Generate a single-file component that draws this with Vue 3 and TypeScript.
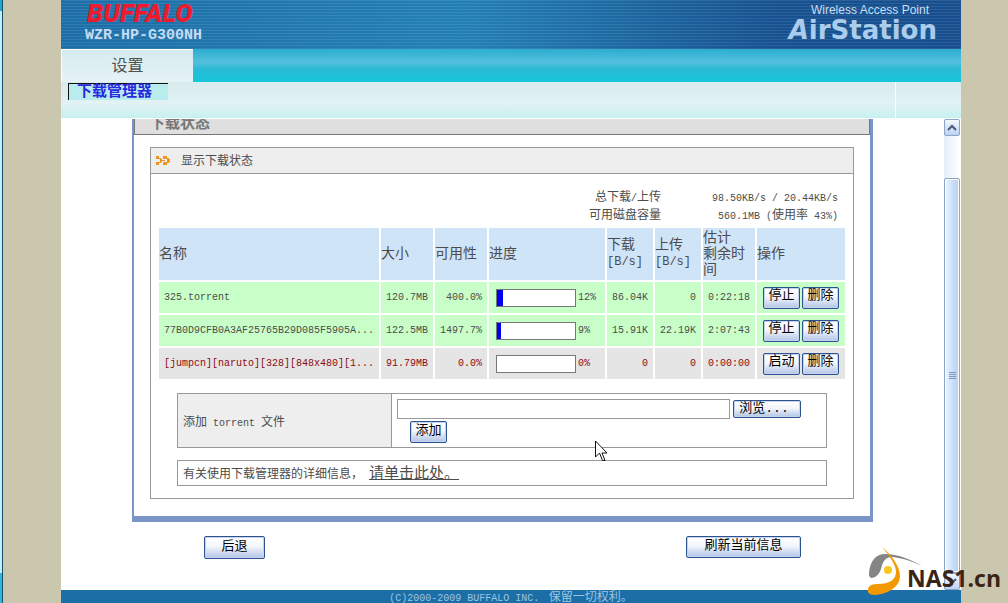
<script setup lang="ts">
import { ref } from 'vue'

interface Torrent {
  name: string
  size: string
  availability: string
  percent: number
  down: string
  up: string
  remaining: string
  running: boolean
}

const torrents = ref<Torrent[]>([
  { name: '325.torrent', size: '120.7MB', availability: '400.0%', percent: 12, down: '86.04K', up: '0', remaining: '0:22:18', running: true },
  { name: '77B0D9CFB0A3AF25765B29D085F5905A...', size: '122.5MB', availability: '1497.7%', percent: 9, down: '15.91K', up: '22.19K', remaining: '2:07:43', running: true },
  { name: '[jumpcn][naruto][328][848x480][1...', size: '91.79MB', availability: '0.0%', percent: 0, down: '0', up: '0', remaining: '0:00:00', running: false },
])

const torrentFile = ref('')
const barWidth = (percent: number) => `${percent === 0 ? 0 : percent - 4}%`
</script>

<template>
  <div class="page">
    <div class="window-edge"></div>
    <div class="site">
      <header class="banner">
        <div class="brand">
          <div class="buffalo">BUFFALO</div>
          <div class="model">WZR-HP-G300NH</div>
        </div>
        <div class="product">
          <div class="tagline">Wireless Access Point</div>
          <div class="airstation"><i>A</i>irStation</div>
        </div>
      </header>

      <nav class="tabs">
        <a href="#settings" class="tab">设置</a>
      </nav>
      <nav class="subnav">
        <a href="#downloads" class="subtab">下载管理器</a>
      </nav>

      <div class="viewport">
        <main class="content">
          <section class="panel">
            <h1 class="panel-title"><span>下载状态</span></h1>
            <div class="box">
              <h2 class="box-title">
                <svg width="14" height="9" viewBox="0 0 14 9" fill="#ee9420" aria-hidden="true">
                  <path d="M0 0h3v2h2v1h1v3H5v1H3v2H0V6h2V3H0z" />
                  <path d="M7 0h4v2h2v1h1v3h-1v1h-2v2H7V6h2V5H6V4h3V3H7z" />
                  <path d="M2 3h2v3H2zM9 3h2v3H9z" fill="#eeeeee" />
                </svg>
                <span>显示下载状态</span>
              </h2>
              <dl class="stats">
                <dt>总下载<span class="latin">/</span>上传</dt>
                <dd><span class="latin">98.50KB/s / 20.44KB/s</span></dd>
                <dt>可用磁盘容量</dt>
                <dd><span class="latin">560.1MB (</span>使用率<span class="latin"> 43%)</span></dd>
              </dl>

              <table class="torrents">
                <colgroup>
                  <col class="c-name" /><col class="c-mid" /><col class="c-mid" /><col class="c-progress" />
                  <col class="c-rate" /><col class="c-rate" /><col class="c-mid" /><col class="c-actions" />
                </colgroup>
                <thead>
                  <tr>
                    <th scope="col">名称</th>
                    <th scope="col">大小</th>
                    <th scope="col">可用性</th>
                    <th scope="col">进度</th>
                    <th scope="col">下载<br /><span class="unit">[B/s]</span></th>
                    <th scope="col">上传<br /><span class="unit">[B/s]</span></th>
                    <th scope="col">估计<br />剩余时间</th>
                    <th scope="col">操作</th>
                  </tr>
                </thead>
                <tbody>
                  <tr v-for="t in torrents" :key="t.name" :class="{ stopped: !t.running }">
                    <td class="name">{{ t.name }}</td>
                    <td>{{ t.size }}</td>
                    <td>{{ t.availability }}</td>
                    <td class="progress">
                      <div class="meter">
                        <div class="bar"><div class="fill" :style="{ width: barWidth(t.percent) }"></div></div>
                        <span>{{ t.percent }}%</span>
                      </div>
                    </td>
                    <td>{{ t.down }}</td>
                    <td>{{ t.up }}</td>
                    <td>{{ t.remaining }}</td>
                    <td class="actions">
                      <div class="pair">
                        <button type="button" class="btn small">{{ t.running ? '停止' : '启动' }}</button>
                        <button type="button" class="btn small">删除</button>
                      </div>
                    </td>
                  </tr>
                </tbody>
              </table>

              <form class="add" @submit.prevent>
                <label class="add-label" for="torrent-file"><span>添加<span class="latin"> torrent </span>文件</span></label>
                <div class="add-fields">
                  <div class="file-row">
                    <input id="torrent-file" v-model="torrentFile" type="text" class="file" />
                    <button type="button" class="btn browse">浏览...</button>
                  </div>
                  <button type="submit" class="btn small submit">添加</button>
                </div>
              </form>

              <p class="info">有关使用下载管理器的详细信息，<a href="#help">请单击此处。</a></p>
            </div>
          </section>

          <div class="page-actions">
            <button type="button" class="btn back">后退</button>
            <button type="button" class="btn refresh">刷新当前信息</button>
          </div>
        </main>

        <div class="scrollbar" aria-hidden="true">
          <div class="arrow">
            <svg width="10" height="7" viewBox="0 0 10 7" fill="none" stroke="#46597c" stroke-width="2"><path d="M1 6l4-4 4 4" /></svg>
          </div>
          <div class="gutter"></div>
          <div class="thumb">
            <svg width="7" height="8" viewBox="0 0 7 8" stroke="#8298be"><path d="M0 .5h7M0 2.5h7M0 4.5h7M0 6.5h7" /></svg>
          </div>
          <div class="arrow">
            <svg width="10" height="7" viewBox="0 0 10 7" fill="none" stroke="#46597c" stroke-width="2"><path d="M1 1l4 4 4-4" /></svg>
          </div>
        </div>
      </div>

      <footer class="footer"><span class="latin">(C)2000-2009 BUFFALO INC. </span>&nbsp;保留一切权利。</footer>
    </div>

    <svg class="pointer" width="13" height="22" viewBox="0 0 13 22" aria-hidden="true">
      <path d="M.5 1v16l4-4 3 7.500h2.500l-3-7.500h5z" fill="#fff" stroke="#111" />
    </svg>

    <div class="watermark">
      <svg width="57" height="50" viewBox="0 0 57 50" aria-hidden="true">
        <path d="M3 27C4 15 10 8 19 8c13 0 25 5 37 12C46 15 36 12 27 11c-8 0-10 4-12 12-2 6-6 9-10 9-2-1-2-3-2-5z" fill="#858585" />
        <path d="M16 1c10 8 18 20 18 29 0 10-11 18-25 19-6 0-8-3-7-6 1-4 5-5 10-5 11 0 18-4 18-12C30 20 25 11 16 1z" fill="#f39800" />
        <circle cx="22" cy="24" r="4" fill="#f8c81c" />
      </svg>
      <span>NAS1.cn</span>
    </div>
  </div>
</template>

<style>
body {
  margin: 0;
  background: #cbc7ae;
}
</style>

<style scoped>
.page {
  position: relative;
  display: flex;
  box-sizing: border-box;
  height: 100vh;
  min-height: 603px;
  overflow: hidden;
  padding-right: 47px;
  font-family: "Liberation Sans", "Noto Sans CJK SC", sans-serif;
  font-size: 12px;
  color: #4c4c4c;
}
.window-edge {
  flex: none;
  width: 2px;
  margin-right: 58px;
  border-right: 1px solid #17506e;
  background: linear-gradient(#27a5cf 11px, #c4eef6 11px calc(100% - 30px), #35b4dc calc(100% - 30px));
}
.site {
  flex: 1;
  display: flex;
  flex-direction: column;
  min-width: 0;
  background: #fff;
}
.latin {
  font-family: "Liberation Mono", monospace;
  font-size: 10px;
  white-space: pre;
}

.banner {
  flex: none;
  display: flex;
  justify-content: space-between;
  height: 49px;
  padding: 0 24px;
  background:
    repeating-linear-gradient(rgba(255, 255, 255, 0.09) 0 1px, transparent 1px 3px),
    linear-gradient(90deg, #1d6ea8, #2380b4 45%, #17518f 80%, #174f8e);
}
.buffalo {
  padding-left: 2px;
  font: italic 900 26px/26px Roboto, "Liberation Sans", sans-serif;
  color: #ed1b2b;
}
.model {
  font: bold 15px/20px "Liberation Mono", monospace;
  color: #c5dcf2;
}
.product {
  text-align: right;
}
.tagline {
  padding-right: 8px;
  font-size: 12px;
  line-height: 21px;
  color: #c8def4;
}
.airstation {
  font: bold 26px/18px "DejaVu Sans", sans-serif;
  color: #abcdec;
}

.tabs {
  flex: none;
  display: flex;
  height: 33px;
  background: linear-gradient(#2aaed0, #55bfdc 40%, #2bbbd6 60%, #17c6d9);
}
.tab {
  box-sizing: border-box;
  width: 132px;
  border-top: 1px solid #fff;
  border-left: 1px solid #fff;
  background: linear-gradient(#d6ebee, #e5f3f5);
  font-size: 16px;
  line-height: 31px;
  text-align: center;
  color: #505050;
  text-decoration: none;
}
.subnav {
  flex: none;
  display: flex;
  align-items: flex-start;
  height: 36px;
  padding: 1px 7px 0;
  box-sizing: border-box;
  margin-bottom: 1px;
  background:
    linear-gradient(#fff, #fff) right 65px top / 1px 100% no-repeat,
    linear-gradient(#d8ebed, #e2f2f5 60%, #c6f1f0);
}
.subtab {
  box-sizing: border-box;
  width: 100px;
  height: 17px;
  padding-left: 8px;
  border-top: 1px solid #111;
  border-left: 1px solid #111;
  background: #b9eded;
  font-size: 15px;
  font-weight: bold;
  line-height: 14px;
  color: #2929e0;
  text-decoration: none;
}

.viewport {
  flex: 1;
  display: flex;
  min-height: 0;
  padding-right: 1px;
}
.content {
  flex: 1;
  min-width: 0;
  overflow: hidden;
}
.panel {
  margin: 0 71px;
  border: solid #7b95c8;
  border-width: 0 3px 6px 2px;
  padding-bottom: 17px;
}
.panel-title {
  display: flex;
  align-items: flex-end;
  box-sizing: border-box;
  height: 16px;
  margin: 0;
  padding-left: 15px;
  overflow: hidden;
  border: solid #777;
  border-width: 0 1px 1px;
  background: #dfdfdf;
  font-size: 15px;
  line-height: 22px;
  color: #777;
}
.box {
  margin: 12px 16px 0;
  border: 1px solid #999;
  padding-bottom: 12px;
}
.box-title {
  display: flex;
  align-items: center;
  gap: 11px;
  height: 25px;
  margin: 0;
  padding-left: 5px;
  border-bottom: 1px solid #999;
  background: #eee;
  font-size: 12px;
  line-height: 22px;
  font-weight: normal;
}
.stats {
  display: grid;
  grid-template-columns: 1fr 177px;
  grid-auto-rows: 18px;
  margin: 14px 15px 2px 0;
  line-height: 18px;
  text-align: right;
}
.stats dd {
  margin: 0;
}

.torrents {
  width: calc(100% - 12px);
  margin: 0 6px;
  table-layout: fixed;
  border-spacing: 2px;
}
.c-mid { width: 52px; }
.c-progress { width: 116px; }
.c-rate { width: 46px; }
.c-actions { width: 88px; }
.torrents th {
  height: 50px;
  padding: 0 0 2px;
  background: #d0e4f8;
  font-size: 14px;
  font-weight: normal;
  line-height: 16px;
  text-align: left;
}
.unit {
  font: 12px/16px "Liberation Mono", monospace;
}
.torrents td {
  height: 30px;
  padding: 1px 5px 0;
  background: #c8ffc8;
  font: 10px/16px "Liberation Mono", monospace;
  text-align: right;
  white-space: nowrap;
}
.torrents .name {
  text-align: left;
}
.torrents .stopped td {
  background: #e5e5e5;
  color: #8c0a14;
}
.torrents .progress {
  padding: 0 7px;
}
.meter {
  display: flex;
  align-items: center;
  gap: 2px;
}
.bar {
  width: 78px;
  height: 16px;
  border: 1px solid #777;
  background: #fff;
}
.fill {
  height: 100%;
  background: #0000f0;
}
.torrents .actions {
  padding: 0 6px;
}
.pair {
  display: flex;
  gap: 2px;
}

.btn {
  box-sizing: border-box;
  padding: 0;
  border: 1px solid #2d5290;
  border-radius: 2px;
  background: linear-gradient(#fff, #f3f6fc 45%, #b3c4e6);
  box-shadow: inset 0 0 0 1px #c4d3ee;
  font-family: "Liberation Mono", "Noto Sans CJK SC", monospace;
  font-size: 13px;
  line-height: 16px;
  color: #000;
}
.small {
  width: 37px;
  height: 22px;
  padding-bottom: 3px;
}

.add {
  display: flex;
  margin: 12px 26px 0;
  border: 1px solid #999;
}
.add-label {
  display: flex;
  align-items: center;
  flex: none;
  width: 208px;
  padding-left: 5px;
  border-right: 1px solid #999;
  background: #eee;
}
.add-fields {
  flex: 1;
  padding: 5px 25px 4px 5px;
}
.file-row {
  display: flex;
  align-items: center;
  gap: 3px;
}
.file {
  flex: 1;
  box-sizing: border-box;
  min-width: 0;
  height: 20px;
  border: 1px solid #999;
  padding: 0 3px;
  background: #fff;
}
.browse {
  width: 68px;
  height: 18px;
  padding-right: 6px;
  line-height: 14px;
}
.submit {
  display: block;
  margin: 2px 0 0 13px;
}
.info {
  height: 24px;
  margin: 12px 26px 0;
  padding-left: 5px;
  border: 1px solid #999;
  line-height: 24px;
}
.info a {
  margin-left: 6px;
  font-size: 15px;
  color: #4c4c4c;
}

.page-actions {
  display: flex;
  justify-content: space-between;
  margin: 14px 143px 0;
}
.back {
  width: 61px;
  height: 23px;
  padding-bottom: 2px;
}
.refresh {
  width: 115px;
  height: 22px;
  padding-bottom: 3px;
}

.scrollbar {
  flex: none;
  display: flex;
  flex-direction: column;
  width: 16px;
  background: linear-gradient(90deg, #e4eefb, #fff);
}
.arrow,
.thumb {
  display: flex;
  align-items: center;
  justify-content: center;
  box-sizing: border-box;
  border: 1px solid #8ba5c8;
  border-radius: 2px;
  background: linear-gradient(#f4f8fe, #bdd3f4);
}
.arrow {
  flex: none;
  height: 17px;
}
.gutter {
  flex: none;
  height: 42px;
}
.thumb {
  flex: 1;
  box-shadow: inset 0 0 0 1px #fff;
  background: linear-gradient(90deg, #edf5ff, #c6ddf9 60%, #b4cff0);
}

.footer {
  flex: none;
  height: 13px;
  overflow: hidden;
  background: #1b6fa6;
  line-height: 14px;
  text-align: center;
  color: #9cc4e2;
}

.pointer {
  position: absolute;
  left: 595px;
  top: 440px;
}
.watermark {
  position: absolute;
  right: 7px;
  bottom: 7px;
  display: flex;
  align-items: flex-end;
}
.watermark svg {
  margin-right: -16px;
}
.watermark span {
  font: bold 23px/36px "Open Sans", sans-serif;
  color: #3b2415;
}
</style>
